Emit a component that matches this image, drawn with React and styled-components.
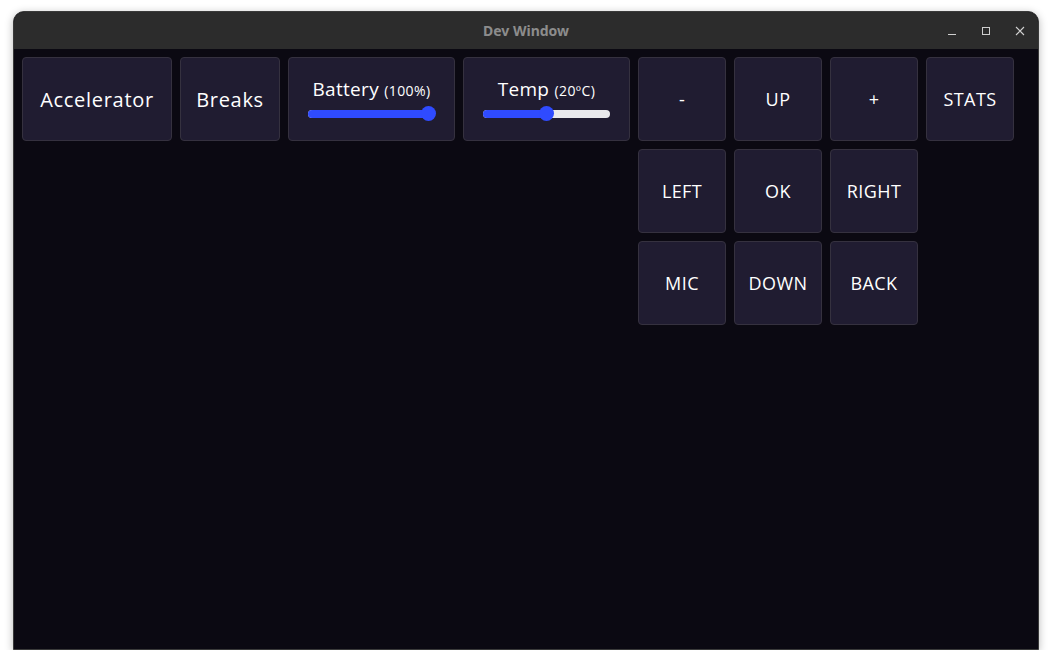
import styled, { createGlobalStyle } from "styled-components";

const GlobalStyle = createGlobalStyle`
  html, body {
    margin: 0;
    padding: 0;
    background: #ffffff;
  }
  * {
    box-sizing: border-box;
  }
`;

const Window = styled.div`
  margin: 11px 13px 0 13px;
  width: 1026px;
  height: 639px;
  border-radius: 11px 11px 0 0;
  border: 1px solid #3a3a3a;
  background: #0b0912;
  box-shadow: 0 2px 8px rgba(0, 0, 0, 0.28);
  display: flex;
  flex-direction: column;
  overflow: hidden;
`;

const TitleBar = styled.div`
  height: 37px;
  flex-shrink: 0;
  background: #2c2c2c;
  display: flex;
  align-items: center;
  justify-content: center;
  position: relative;
  font-family: "Noto Sans", "DejaVu Sans", sans-serif;
  font-weight: 700;
  font-size: 14px;
  color: #8c8c8c;
`;

const Controls = styled.div`
  position: absolute;
  right: 1px;
  top: 0;
  height: 100%;
  display: flex;
  align-items: center;
`;

const ControlButton = styled.div`
  width: 34px;
  height: 37px;
  display: flex;
  align-items: center;
  justify-content: center;
  color: #cfcfcf;
`;

const Content = styled.div`
  flex: 1;
  padding: 8px;
  display: flex;
  align-items: flex-start;
  gap: 8px;
  font-family: "Open Sans", "Liberation Sans", sans-serif;
  color: #ffffff;
`;

const Tile = styled.div`
  width: ${(p) => p.$w || 88}px;
  height: 84px;
  flex-shrink: 0;
  background: #201c31;
  border: 1px solid #35313f;
  border-radius: 4px;
  display: flex;
  flex-direction: column;
  align-items: center;
  justify-content: center;
  font-size: ${(p) => p.$size || 18}px;
  letter-spacing: ${(p) => (p.$size ? 0.7 : 0.4)}px;
`;

const Pad = styled.div`
  display: grid;
  grid-template-columns: repeat(4, 88px);
  grid-auto-rows: 84px;
  gap: 8px;
`;

const Label = styled.div`
  font-size: 19px;
  line-height: 22px;
  margin-top: -3px;
  letter-spacing: 0.3px;
  white-space: nowrap;
`;

const Unit = styled.span`
  font-size: 14px;
  letter-spacing: 0.4px;
`;

const Track = styled.div`
  position: relative;
  margin-top: 8px;
  width: 127px;
  height: 8px;
  border-radius: 4px;
  background: #e9e9ec;
`;

const Fill = styled.div`
  height: 100%;
  border-radius: 4px;
  background: #2f4bff;
`;

const Thumb = styled.div`
  position: absolute;
  top: 50%;
  width: 15px;
  height: 15px;
  margin: -7.5px 0 0 -7.5px;
  border-radius: 50%;
  background: #2f4bff;
`;

const Slider = ({ value }) => {
  const x = 7 + (value / 100) * 113;
  return (
    <Track>
      <Fill style={{ width: `${x + 4}px` }} />
      <Thumb style={{ left: `${x}px` }} />
    </Track>
  );
};

const SliderTile = ({ label, unit, value }) => (
  <Tile $w={167}>
    <Label>
      {label} <Unit>({unit})</Unit>
    </Label>
    <Slider value={value} />
  </Tile>
);

const padKeys = ["-", "UP", "+", "STATS", "LEFT", "OK", "RIGHT", null, "MIC", "DOWN", "BACK"];

export default function App() {
  return (
    <>
      <GlobalStyle />
      <Window>
        <TitleBar>
          Dev Window
          <Controls>
            <ControlButton>
              <svg width="10" height="10" viewBox="0 0 10 10">
                <path d="M1 8.5h8" stroke="currentColor" strokeWidth="1" />
              </svg>
            </ControlButton>
            <ControlButton>
              <svg width="10" height="10" viewBox="0 0 10 10">
                <rect x="1.5" y="1.5" width="7" height="7" fill="none" stroke="currentColor" strokeWidth="1" />
              </svg>
            </ControlButton>
            <ControlButton>
              <svg width="10" height="10" viewBox="0 0 10 10">
                <path d="M1 1l8 8M9 1l-8 8" stroke="currentColor" strokeWidth="1.1" />
              </svg>
            </ControlButton>
          </Controls>
        </TitleBar>
        <Content>
          <Tile $w={150} $size={20}>Accelerator</Tile>
          <Tile $w={100} $size={20}>Breaks</Tile>
          <SliderTile label="Battery" unit="100%" value={100} />
          <SliderTile label="Temp" unit="20ºC" value={50} />
          <Pad>
            {padKeys.map((k, i) =>
              k ? <Tile key={i}>{k}</Tile> : <div key={i} />
            )}
          </Pad>
        </Content>
      </Window>
    </>
  );
}
